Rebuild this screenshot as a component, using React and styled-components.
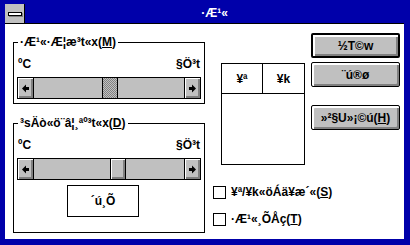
import React from 'react';
import styled, {createGlobalStyle} from 'styled-components';

const GlobalStyle = createGlobalStyle`
	html, body {
		margin: 0;
		padding: 0;
		background: #fff;
	}
`;

const Window = styled.div`
	box-sizing: border-box;
	width: 410px;
	height: 245px;
	padding: 4px 6px 6px 5px;
	background: #0000aa;
	display: flex;
	flex-direction: column;
	font: bold 12px/14px 'Liberation Sans', Arial, sans-serif;
	color: #000;
`;

const TitleBar = styled.div`
	display: flex;
	height: 19px;
	border-bottom: 1px solid #000;
	background: #0000aa;
`;

const SysMenu = styled.div`
	width: 19px;
	border-right: 1px solid #000;
	background: #c0c0c0;
	display: flex;
	align-items: center;
	justify-content: center;
`;

const Dash = styled.div`
	width: 12px;
	height: 2px;
	background: #fff;
	border: 1px solid #000;
	box-shadow: 1px 1px 0 #808080;
`;

const Title = styled.div`
	flex: 1;
	text-align: center;
	color: #fff;
	line-height: 19px;
`;

const Client = styled.div`
	flex: 1;
	background: #fff;
	display: grid;
	grid-template-columns: 192px 1fr;
	column-gap: 8px;
	padding: 9px 4px 0 8px;
`;

const LeftCol = styled.div`
	padding-top: 9px;
	display: flex;
	flex-direction: column;
	gap: 19px;
`;

const Group = styled.div`
	position: relative;
	border: 1px solid #000;
	padding: 14px 3px ${p => p.$bottom}px;
`;

const Legend = styled.div`
	position: absolute;
	top: -8px;
	left: 4px;
	padding: 0 2px;
	background: #fff;
	white-space: nowrap;
`;

const Key = styled.span`
	text-decoration: underline;
`;

const Scale = styled.div`
	display: flex;
	justify-content: space-between;
	padding: 0 1px;
`;

const ScrollBar = styled.div`
	margin-top: 6px;
	height: 22px;
	box-sizing: border-box;
	border: 1px solid #000;
	display: flex;
	background: #c0c0c0;
`;

const Arrow = styled.div`
	width: 15px;
	${p => (p.$right ? 'border-left' : 'border-right')}: 1px solid #000;
	background: #c0c0c0;
	box-shadow: inset 1px 1px 0 #fff, inset -2px -2px 0 #808080;
	display: flex;
	align-items: center;
	justify-content: center;
`;

const Track = styled.div`
	flex: 1;
	position: relative;
`;

const Thumb = styled.div`
	position: absolute;
	top: 0;
	bottom: 0;
	width: 16px;
	box-sizing: border-box;
	border-left: 1px solid #000;
	border-right: 1px solid #000;
	background: ${p =>
		p.$hatched
			? 'repeating-conic-gradient(#808080 0 25%, #c0c0c0 0 50%) 0 0 / 2px 2px'
			: '#c0c0c0'};
	box-shadow: ${p => (p.$hatched ? 'none' : 'inset 1px 1px 0 #fff, inset -2px -2px 0 #808080')};
`;

const TestBox = styled.div`
	margin: 5px 0 0 50px;
	width: 72px;
	height: 32px;
	box-sizing: border-box;
	border: 1px solid #000;
	display: flex;
	align-items: center;
	justify-content: center;
`;

const RightCol = styled.div`
	display: flex;
	flex-direction: column;
`;

const TopRow = styled.div`
	display: flex;
	justify-content: space-between;
	align-items: flex-start;
`;

const ListBox = styled.div`
	margin: 30px 0 0 8px;
	width: 84px;
	height: 102px;
	box-sizing: border-box;
	border: 1px solid #000;
`;

const ListHead = styled.div`
	display: grid;
	grid-template-columns: 40px 1fr;
	height: 29px;
	border-bottom: 1px solid #000;
`;

const HeadCell = styled.div`
	display: flex;
	align-items: center;
	justify-content: center;
	& + & {
		border-left: 1px solid #000;
	}
`;

const ButtonCol = styled.div`
	display: flex;
	flex-direction: column;
	width: 89px;
`;

const Button = styled.div`
	margin-top: ${p => p.$gap || 0}px;
	height: 25px;
	box-sizing: border-box;
	border: ${p => (p.$default ? 2 : 1)}px solid #000;
	border-radius: 2px;
	background: #c0c0c0;
	box-shadow: inset 2px 2px 0 #fff, inset -2px -2px 0 #808080;
	display: flex;
	align-items: center;
	justify-content: center;
	white-space: nowrap;
`;

const CheckList = styled.div`
	margin-top: 20px;
	display: flex;
	flex-direction: column;
	gap: 13px;
`;

const CheckRow = styled.div`
	display: flex;
	align-items: center;
	height: 14px;
	gap: 5px;
	white-space: nowrap;
`;

const Box = styled.div`
	width: 13px;
	height: 13px;
	box-sizing: border-box;
	border: 1px solid #000;
	background: #fff;
`;

function ArrowGlyph({right}) {
	return (
		<svg width="7" height="9" viewBox="0 0 7 9" style={{display: 'block'}}>
			<g transform={right ? 'translate(7 0) scale(-1 1)' : undefined}>
				<polygon points="0,4.5 4,0.5 4,8.5" fill="#000" />
				<rect x="4" y="3" width="3" height="3" fill="#000" />
			</g>
		</svg>
	);
}

function Slider({at, hatched}) {
	return (
		<ScrollBar>
			<Arrow><ArrowGlyph /></Arrow>
			<Track>
				<Thumb $hatched={hatched} style={{left: at}} />
			</Track>
			<Arrow $right><ArrowGlyph right /></Arrow>
		</ScrollBar>
	);
}

export default function App() {
	return (
		<>
			<GlobalStyle />
			<Window>
				<TitleBar>
					<SysMenu><Dash /></SysMenu>
					<Title>·Æ¹«</Title>
				</TitleBar>
				<Client>
					<LeftCol>
						<Group $bottom={4}>
							<Legend>·Æ¹«·Æ¦æ³t«x(<Key>M</Key>)</Legend>
							<Scale><span>ºC</span><span>§Ö³t</span></Scale>
							<Slider at={68} hatched />
						</Group>
						<Group $bottom={15}>
							<Legend>³sÄò«ö¨â¦¸ªº³t«x(<Key>D</Key>)</Legend>
							<Scale><span>ºC</span><span>§Ö³t</span></Scale>
							<Slider at={76} />
							<TestBox>´ú¸Õ</TestBox>
						</Group>
					</LeftCol>
					<RightCol>
						<TopRow>
							<ListBox>
								<ListHead>
									<HeadCell>¥ª</HeadCell>
									<HeadCell>¥k</HeadCell>
								</ListHead>
							</ListBox>
							<ButtonCol>
								<Button $default>½T©w</Button>
								<Button $gap={4}>¨ú®ø</Button>
								<Button $gap={18}><span>»²§U»¡©ú(<Key>H</Key>)</span></Button>
							</ButtonCol>
						</TopRow>
						<CheckList>
							<CheckRow><Box /><span>¥ª/¥k«öÁä¥æ´«(<Key>S</Key>)</span></CheckRow>
							<CheckRow><Box /><span>·Æ¹«¸ÕÅç(<Key>T</Key>)</span></CheckRow>
						</CheckList>
					</RightCol>
				</Client>
			</Window>
		</>
	);
}
